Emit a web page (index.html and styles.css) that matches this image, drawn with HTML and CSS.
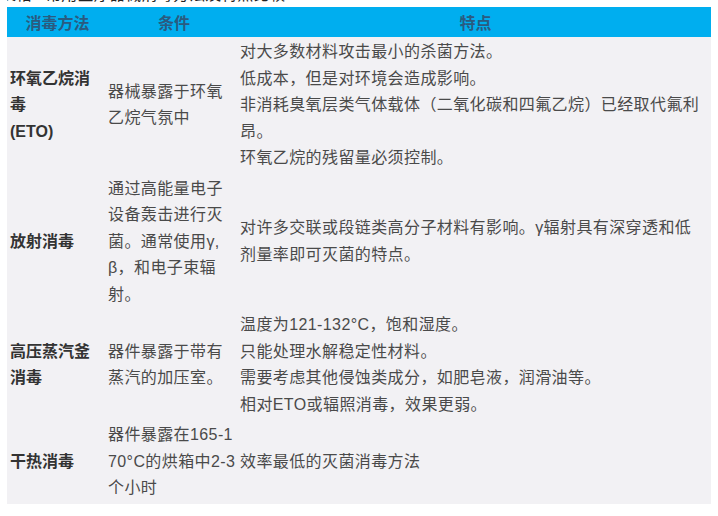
FILE: index.html
```html
<!DOCTYPE html>
<html lang="zh">
<head>
<meta charset="utf-8">
<link rel="stylesheet" href="styles.css">
</head>
<body>
<div class="page">
  <div class="caption"><span>表格2 常用医疗器械消毒方法及特点比较</span></div>
  <table class="grid">
    <colgroup>
      <col class="c1"><col class="c2"><col class="c3">
    </colgroup>
    <thead>
      <tr><th>消毒方法</th><th>条件</th><th>特点</th></tr>
    </thead>
    <tbody>
      <tr>
        <td class="name">环氧乙烷消<br>毒<br>(ETO)</td>
        <td class="cond">器械暴露于环氧<br>乙烷气氛中</td>
        <td class="feat">对大多数材料攻击最小的杀菌方法。<br>低成本，但是对环境会造成影响。<br>非消耗臭氧层类气体载体（二氧化碳和四氟乙烷）已经取代氟利<br>昂。<br>环氧乙烷的残留量必须控制。</td>
      </tr>
      <tr>
        <td class="name">放射消毒</td>
        <td class="cond">通过高能量电子<br>设备轰击进行灭<br>菌。通常使用γ,<br>β，和电子束辐<br>射。</td>
        <td class="feat">对许多交联或段链类高分子材料有影响。γ辐射具有深穿透和低<br>剂量率即可灭菌的特点。</td>
      </tr>
      <tr>
        <td class="name">高压蒸汽釜<br>消毒</td>
        <td class="cond">器件暴露于带有<br>蒸汽的加压室。</td>
        <td class="feat">温度为121-132°C，饱和湿度。<br>只能处理水解稳定性材料。<br>需要考虑其他侵蚀类成分，如肥皂液，润滑油等。<br>相对ETO或辐照消毒，效果更弱。</td>
      </tr>
      <tr>
        <td class="name">干热消毒</td>
        <td class="cond">器件暴露在165-1<br>70°C的烘箱中2-3<br>个小时</td>
        <td class="feat">效率最低的灭菌消毒方法</td>
      </tr>
    </tbody>
  </table>
</div>
</body>
</html>
```

FILE: styles.css
```css
html, body {
  margin: 0;
  padding: 0;
  background: #ffffff;
}
.page {
  padding: 0 7px;
  font-family: "Liberation Sans", "Noto Sans CJK SC", sans-serif;
  font-size: 16px;
  color: #4a4a4a;
}
.caption {
  height: 7px;
  overflow: hidden;
  color: #222;
  font-size: 16px;
}
.caption span {
  display: block;
  line-height: 16px;
  margin-top: -13px;
  margin-left: -7px;
  white-space: nowrap;
}
.grid {
  width: 704px;
  border-collapse: collapse;
  table-layout: fixed;
  background: #f2f1f4;
}
.c1 { width: 101px; }
.c2 { width: 132px; }
.c3 { width: 471px; }
.grid th {
  background: #00aeef;
  height: 30px;
  padding: 0;
  font-weight: bold;
  color: #2a5b80;
  text-align: center;
  vertical-align: middle;
}
.grid td {
  padding: 2px 0;
  line-height: 26.5px;
  vertical-align: middle;
  white-space: nowrap;
  overflow: visible;
  letter-spacing: 0.4px;
}
.grid td.name {
  padding-left: 3px;
  font-weight: bold;
  color: #333333;
  letter-spacing: 0;
}
.grid td.cond {
  padding-left: 0;
}
.grid td.feat {
  padding-left: 0;
}
```
